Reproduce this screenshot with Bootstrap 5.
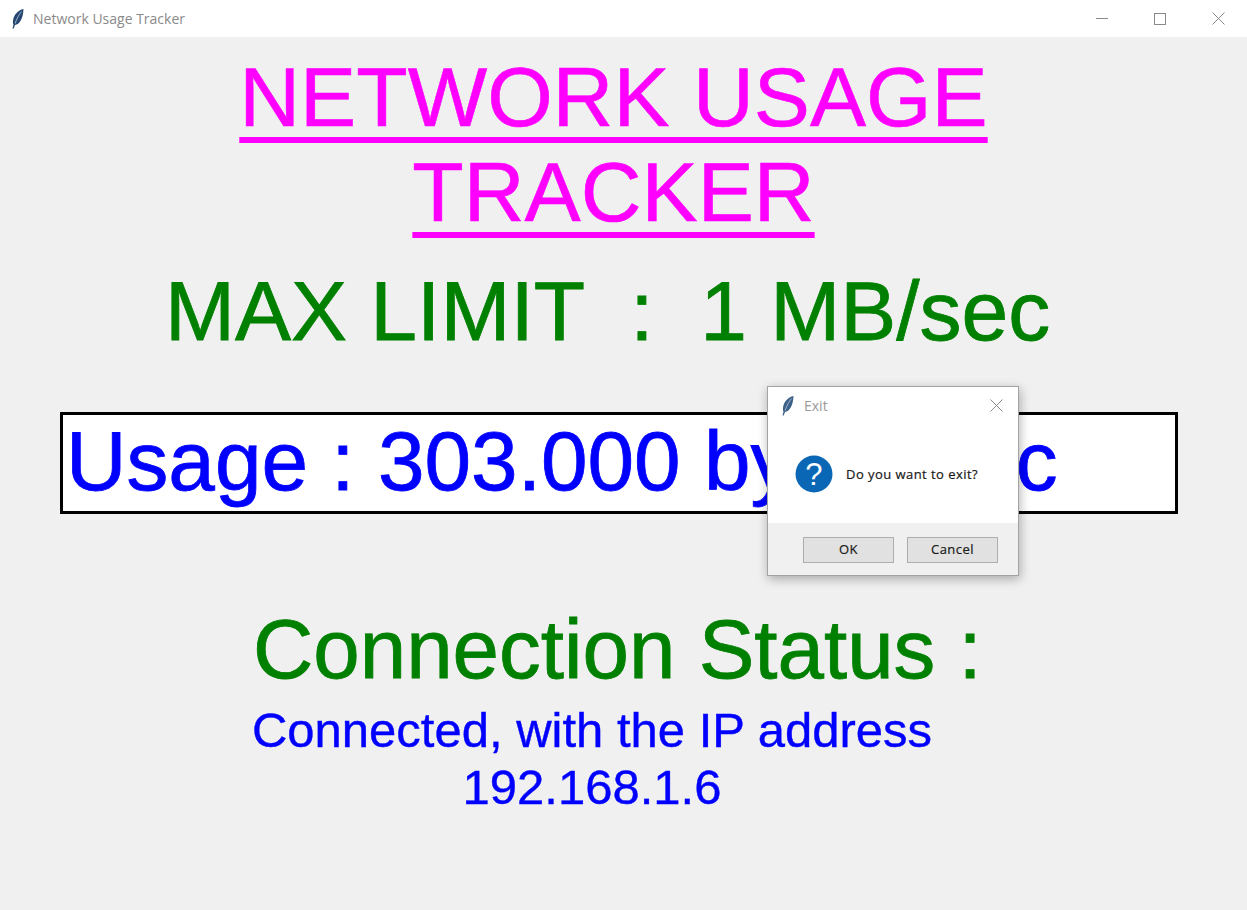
<!DOCTYPE html>
<html lang="en">
  <head>
    <meta charset="UTF-8" />
    <title>Network Usage Tracker</title>
    <link href="https://cdn.jsdelivr.net/npm/bootstrap@5.3.0/dist/css/bootstrap.min.css" rel="stylesheet" />
    <style>
      html, body { height: 100%; overflow: hidden; }
      body { background: #f0f0f0; font-family: "Liberation Sans", Arial, sans-serif; }
      .app-window { height: 910px; }
      .title-bar { height: 37px; background: #fff; padding-left: 10px; font-family: "Open Sans", sans-serif; font-size: 14px; color: #8a8a8a; }
      .title-bar .feather { margin-right: 7px; }
      .win-btn { width: 58px; height: 37px; }
      .main-title { color: #ff00ff; font-size: 84.200px; line-height: 95px; text-decoration: underline; text-decoration-thickness: 6px; text-underline-offset: 11px; text-align: center; width: 800px; margin: 13px 0 0 213.500px; font-weight: 400; -webkit-text-stroke: .6px #ff00ff; }
      .limit-text { color: #008000; font-size: 84px; line-height: 96px; margin: 23px 0 0 165px; white-space: pre; -webkit-text-stroke: .8px #008000; }
      .usage-box { width: 1118px; height: 102px; margin: 53px 0 0 60px; background: #fff; border: 3px solid #000; color: #0000ff; font-size: 83.750px; line-height: 92px; padding-left: 3px; white-space: pre; -webkit-text-stroke: .8px #0000ff; }
      .status-title { color: #008000; font-size: 83.500px; line-height: 96px; margin: 87px 0 0 253px; -webkit-text-stroke: .8px #008000; }
      .status-text { color: #0000ff; font-size: 49px; line-height: 57px; width: 690px; margin: 5px 0 0 247px; text-align: center; -webkit-text-stroke: .4px #0000ff; }
      .exit-dialog { position: absolute; left: 767px; top: 386px; width: 252px; height: 190px; background: #fff; border: 1px solid #a3a3a3; box-shadow: 1px 3px 10px rgba(0,0,0,.3); font-family: "Open Sans", sans-serif; }
      .dialog-head { height: 37px; padding-left: 12px; font-size: 14px; color: #9a9a9a; }
      .dialog-body { height: 99px; padding-left: 27px; font-size: 13px; letter-spacing: .45px; color: #1a1a1a; gap: 13px; -webkit-text-stroke: .2px #1a1a1a; }
      .dialog-body span { padding-top: 2px; }
      .dialog-foot { height: 52px; background: #f0f0f0; padding: 14px 20px 0 35px; gap: 13px; }
      .dialog-btn { width: 91px; height: 26px; padding: 0; border: 1px solid #adadad; border-radius: 0; background: #e1e1e1; font-size: 13px; letter-spacing: .45px; color: #1a1a1a; -webkit-text-stroke: .2px #1a1a1a; }
    </style>
  </head>
  <body>
    <div class="app-window">
      <div class="title-bar d-flex align-items-center">
        <svg class="feather" width="16" height="22" viewBox="0 0 16 22"><path d="M13.500 1C8 2 3.500 7 3 13c-.2 2 0 3 .5 3.500L2.500 20.500h1.200L5 17c4.500-.5 8-6 8.500-16z" fill="#24466f"/><path d="M11.500 3.500C9 6.500 6.500 11 5.200 15.500" stroke="#a9c0da" stroke-width=".9" fill="none"/></svg>
        <span>Network Usage Tracker</span>
        <div class="ms-auto d-flex">
          <div class="win-btn d-flex align-items-center justify-content-center"><svg width="12" height="12" viewBox="0 0 12 12"><path d="M0 5.500h12" stroke="#8a8a8a"/></svg></div>
          <div class="win-btn d-flex align-items-center justify-content-center"><svg width="12" height="12" viewBox="0 0 12 12"><rect x=".5" y=".5" width="11" height="11" fill="none" stroke="#8a8a8a"/></svg></div>
          <div class="win-btn d-flex align-items-center justify-content-center"><svg width="13" height="13" viewBox="0 0 13 13"><path d="M.5.500l12 12M12.500.500l-12 12" stroke="#8a8a8a"/></svg></div>
        </div>
      </div>

      <h1 class="main-title">NETWORK USAGE TRACKER</h1>
      <div class="limit-text">MAX LIMIT  :  1 MB/sec</div>
      <div class="usage-box">Usage : 303.000 bytes/sec</div>
      <div class="status-title">Connection Status :</div>
      <div class="status-text">Connected, with the IP address 192.168.1.6</div>
    </div>

    <!-- Dialogo de saida -->
    <div class="exit-dialog">
      <div class="dialog-head d-flex align-items-center">
        <svg class="me-2" width="16" height="22" viewBox="0 0 16 22"><path d="M13.500 1C8 2 3.500 7 3 13c-.2 2 0 3 .5 3.500L2.500 20.500h1.200L5 17c4.500-.5 8-6 8.500-16z" fill="#3d6087"/><path d="M11.500 3.500C9 6.500 6.500 11 5.200 15.500" stroke="#a9c0da" stroke-width=".9" fill="none"/></svg>
        <span>Exit</span>
        <svg class="ms-auto" style="margin-right:15px" width="13" height="13" viewBox="0 0 13 13"><path d="M.5.500l12 12M12.500.500l-12 12" stroke="#8a8a8a"/></svg>
      </div>
      <div class="dialog-body d-flex align-items-center">
        <svg width="38" height="38" viewBox="0 0 38 38"><circle cx="19" cy="19" r="18.500" fill="#0a67b5"/><text x="19" y="30" text-anchor="middle" font-family="Liberation Sans" font-size="31" fill="#fff">?</text></svg>
        <span>Do you want to exit?</span>
      </div>
      <div class="dialog-foot d-flex">
        <button class="dialog-btn" type="button">OK</button>
        <button class="dialog-btn" type="button">Cancel</button>
      </div>
    </div>

    <script src="https://cdn.jsdelivr.net/npm/bootstrap@5.3.0/dist/js/bootstrap.bundle.min.js"></script>
  </body>
</html>
